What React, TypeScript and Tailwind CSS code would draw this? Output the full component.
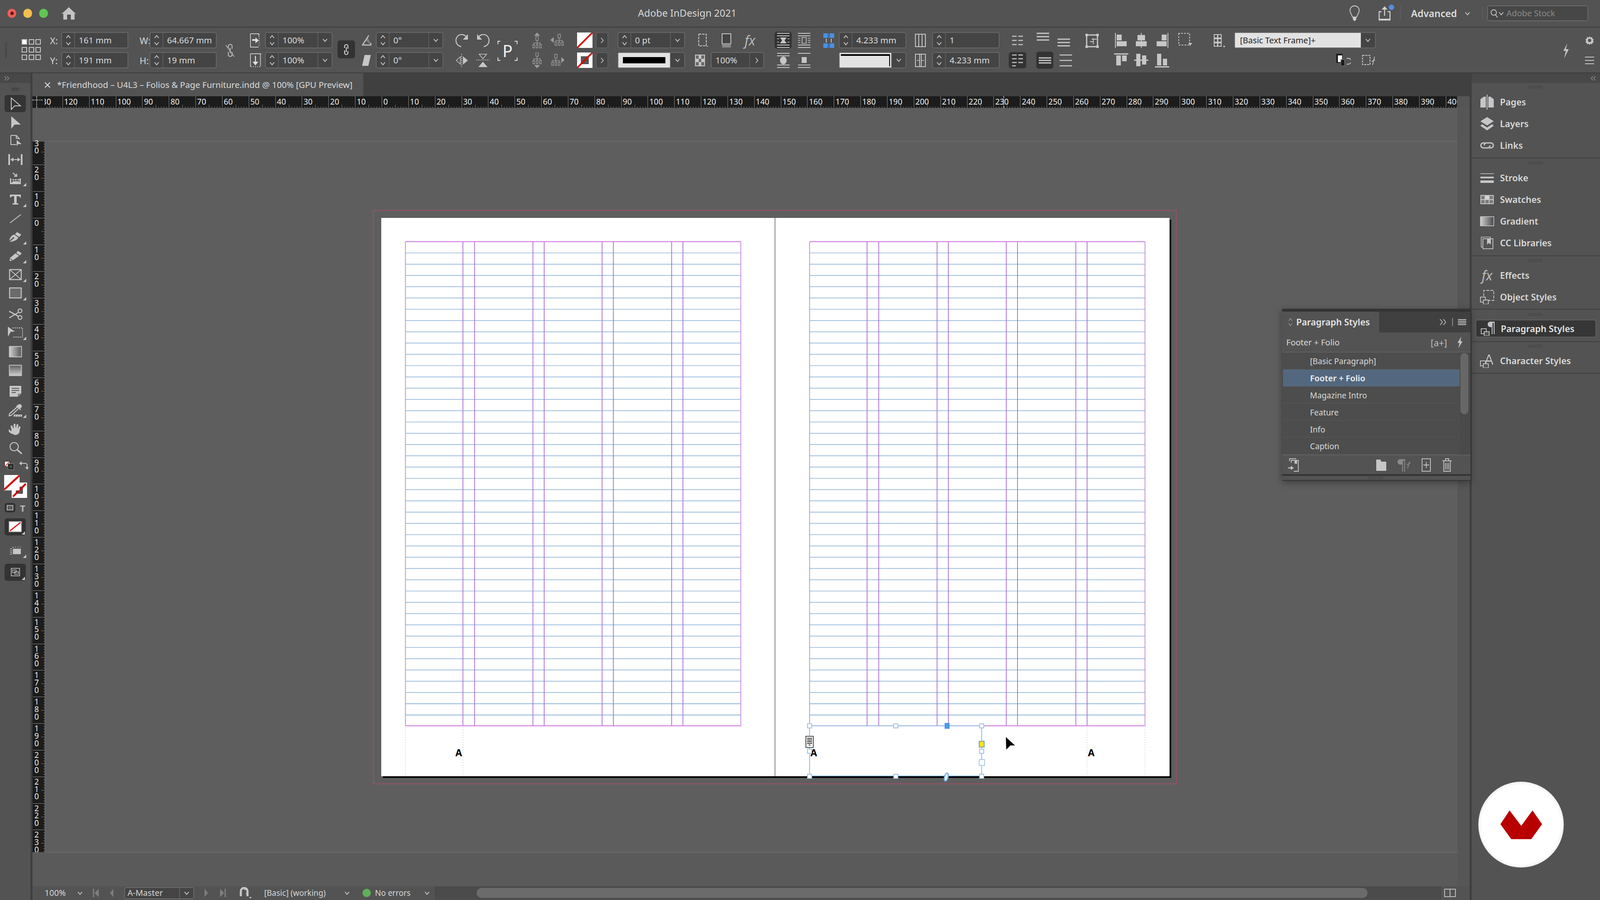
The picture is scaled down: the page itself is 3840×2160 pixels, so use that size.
import React from 'react';

const C = '#c6c6c6';
const Svg = ({ w, h, vb, children, className = '' }: any) => (
  <svg width={w} height={h} viewBox={vb || `0 0 ${w} ${h}`} className={`block shrink-0 ${className}`}>{children}</svg>
);
const Caret = ({ dir = 'd', c = '#d0d0d0' }: any) => (
  <Svg w={14} h={9}>
    <path d={dir === 'd' ? 'M2 1.5 7 7.5 12 1.5' : 'M2 7.5 7 1.5 12 7.5'} fill="none" stroke={c} strokeWidth="1.8" />
  </Svg>
);
const RightCaret = () => (
  <Svg w={9} h={16}><path d="M1.5 2 7 8 1.5 14" fill="none" stroke="#d0d0d0" strokeWidth="1.6" /></Svg>
);
const Stepper = () => (
  <div className="flex h-full w-[31px] shrink-0 flex-col items-center justify-center gap-[7px] border-r-2 border-[#5a5a5a]">
    <Caret dir="u" /><Caret />
  </div>
);
const Drop = () => (
  <div className="flex h-full w-[34px] shrink-0 items-center justify-center border-l-2 border-[#5a5a5a]"><Caret /></div>
);
const Field = ({ w, text, step = true, drop = false, right = false }: any) => (
  <div className={`flex h-[39px] shrink-0 items-center rounded-[5px] border-2 border-[#666666] bg-[#444444] text-[20.5px] leading-none text-[#dddddd] ${w}`}>
    {step && <Stepper />}
    <span className="flex-1 whitespace-nowrap pl-[9px]">{text}</span>
    {drop && <Drop />}
    {right && <div className="flex h-full w-[34px] shrink-0 items-center justify-center border-l-2 border-[#5a5a5a]"><RightCaret /></div>}
  </div>
);
const Rows = ({ className = '', children }: any) => <div className={`flex shrink-0 flex-col gap-[9px] ${className}`}>{children}</div>;
const Row = ({ className = '', children }: any) => <div className={`flex h-[39px] items-center ${className}`}>{children}</div>;
const Label = ({ children }: any) => <span className="w-[27px] shrink-0 text-[22px] leading-none text-[#d4d4d4]">{children}</span>;
const Dark = ({ className = '', children }: any) => (
  <div className={`flex items-center justify-center rounded-[6px] bg-[#333333] ${className}`}>{children}</div>
);
const NoneSwatch = ({ stroke = false }: any) => (
  <Svg w={37} h={37}>
    <rect width="37" height="37" fill="#ffffff" />
    {stroke && <rect x="9" y="9" width="19" height="19" fill="#555555" />}
    <path d="M0 37 37 0" stroke="#d40000" strokeWidth="4" />
  </Svg>
);
const Fly = () => <span className="absolute bottom-[2px] right-[10px] h-0 w-0 border-b-[8px] border-l-[8px] border-b-[#c6c6c6] border-l-transparent" />;

const Tool = ({ m = '', fly = false, children, dark = false }: any) => (
  <div className={`relative flex h-[41px] w-[73px] shrink-0 items-center justify-center ${m}`}>
    {dark && <div className="absolute inset-x-[11px] inset-y-0 rounded-[6px] bg-[#343434]" />}
    <div className="relative">{children}</div>
    {fly && <Fly />}
  </div>
);

const ToolBar = () => (
  <div className="flex w-[73px] shrink-0 flex-col bg-[#535353]">
    <div className="flex h-[23px] items-center bg-[#484848] pl-[10px]">
      <Svg w={14} h={12}><path d="M1 1l4 5-4 5M7 1l4 5-4 5" fill="none" stroke="#aaaaaa" strokeWidth="1.2" /></Svg>
    </div>
    <div className="flex h-[29px] items-center justify-center">
      <div className="h-[8px] w-[18px] bg-[repeating-linear-gradient(90deg,#3a3a3a_0_1px,transparent_1px_2px)]" />
    </div>
    <Tool dark><Svg w={30} h={30}><path d="M5 1 27 20H13L5 29Z" fill="none" stroke={C} strokeWidth="2" /></Svg></Tool>
    <Tool m="mt-[4px]"><Svg w={30} h={30}><path d="M5 0 28 20H13L5 30Z" fill={C} /></Svg></Tool>
    <Tool m="mt-[2px]"><Svg w={30} h={30}><path d="M4 3h13l7 7v3M17 3v7h7M4 3v22h13" fill="none" stroke={C} strokeWidth="2" /><path d="M18 14 30 24H21L18 29Z" fill={C} /></Svg></Tool>
    <Tool m="mt-[5px]"><Svg w={36} h={30}><path d="M1 2h4v26H1zM31 2h4v26h-4z" fill={C} /><path d="M7 15H29" stroke={C} strokeWidth="2" /><path d="M6 15l7-5v10zM30 15l-7-5v10z" fill={C} /></Svg></Tool>
    <Tool m="mt-[5px]" fly><Svg w={30} h={30}><path d="M2 14h3v10h20V14h3v14H2z" fill={C} /><path d="M8 16h4v3H8zM14 16h4v3h-4zM20 16h4v3h-4zM8 21h16v3H8z" fill={C} /><path d="M9 1l8 7M12 9h6V3" fill="none" stroke={C} strokeWidth="2.5" /></Svg></Tool>
    <Tool m="mt-[9px]" fly><Svg w={30} h={30}><path d="M2 3h26v7h-2l-2-3h-6v17h4v3H8v-3h4V7H6l-2 3H2z" fill={C} /></Svg></Tool>
    <Tool m="mt-[4px]"><Svg w={30} h={30}><path d="M2 26 28 6" stroke={C} strokeWidth="2.2" /></Svg></Tool>
    <Tool m="mt-[4px]" fly><Svg w={32} h={30}><path d="M20 3 30 9 25 15 15 8z" fill={C} /><path d="M13 9 23 16c-2 6-10 9-21 11l9-8a2 2 0 1 0-2-2l-8 7c2-9 7-14 12-15z" fill={C} /></Svg></Tool>
    <Tool m="mt-[4px]" fly><Svg w={32} h={30}><path d="M22 3 31 9 27 14 18 8zM16 9 25 15 11 25 2 28 3 20z" fill={C} /><path d="M4 22l5 3" stroke="#535353" strokeWidth="1.5" /></Svg></Tool>
    <Tool m="mt-[4px]" fly><Svg w={32} h={30}><rect x="2" y="3" width="28" height="24" fill="none" stroke={C} strokeWidth="2.4" /><path d="M2 3 30 27M30 3 2 27" stroke={C} strokeWidth="1.8" /></Svg></Tool>
    <Tool m="mt-[3px]" fly><Svg w={32} h={30}><rect x="2" y="3" width="28" height="24" fill="#6b6b6b" stroke={C} strokeWidth="2.4" /></Svg></Tool>
    <Tool m="mt-[10px]"><Svg w={34} h={30}><path d="M2 8 24 20M2 24 24 11" stroke={C} strokeWidth="2.6" /><circle cx="28" cy="7" r="4.5" fill="none" stroke={C} strokeWidth="2.4" /><circle cx="28" cy="23" r="4.5" fill="none" stroke={C} strokeWidth="2.4" /></Svg></Tool>
    <Tool m="mt-[3px]" fly><Svg w={38} h={30}><path d="M1 1 18 13 8 13 1 25Z" fill={C} /><path d="M12 4H36V26H12" fill="none" stroke={C} strokeWidth="1.8" strokeDasharray="3 2" /></Svg></Tool>
    <Tool m="mt-[5px]"><Svg w={32} h={28}><defs><linearGradient id="g1"><stop offset="0" stopColor="#d0d0d0" /><stop offset="1" stopColor="#555555" /></linearGradient></defs><rect x="1.5" y="1.5" width="29" height="25" fill="url(#g1)" stroke={C} strokeWidth="2" /></Svg></Tool>
    <Tool m="mt-[4px]"><Svg w={32} h={28}><defs><linearGradient id="g2" x2="0" y2="1"><stop offset="0" stopColor="#5c5c5c" /><stop offset="1" stopColor="#cfcfcf" /></linearGradient></defs><rect x="1.5" y="1.5" width="29" height="25" fill="url(#g2)" stroke={C} strokeWidth="2" /></Svg></Tool>
    <Tool m="mt-[9px]"><Svg w={30} h={28}><path d="M1 1H29V20L21 27H1Z" fill={C} /><path d="M6 7H24M6 12H24M6 17H16" stroke="#535353" strokeWidth="2" /><path d="M22 26V21H28" fill="none" stroke="#535353" strokeWidth="1.5" /></Svg></Tool>
    <Tool m="mt-[5px]" fly><Svg w={40} h={34}><path d="M24 7 33 16M27 4a4 4 0 0 1 6 6l-4 3-6-6z" fill={C} stroke={C} strokeWidth="2" /><path d="M24 9 6 25l-1 5 5-1L27 13" fill="none" stroke={C} strokeWidth="2.4" /><path d="M16 27h20v5H16z" fill={C} /><path d="M19 29h2v2h-2zM25 29h2v2h-2zM31 29h2v2h-2z" fill="#535353" /></Svg></Tool>
    <Tool m="mt-[4px]"><Svg w={32} h={30}>
      <g fill={C}>
        <ellipse cx="16" cy="20" rx="10" ry="9" />
        <rect x="6" y="6" width="4.500" height="16" rx="2.200" transform="rotate(-14 8 14)" />
        <rect x="12" y="2" width="4.500" height="18" rx="2.200" transform="rotate(-4 14 10)" />
        <rect x="18" y="3" width="4.500" height="17" rx="2.200" transform="rotate(6 20 10)" />
        <rect x="23" y="8" width="4" height="14" rx="2" transform="rotate(16 25 14)" />
        <rect x="0" y="14" width="4.500" height="14" rx="2.200" transform="rotate(-48 2 20)" />
      </g>
    </Svg></Tool>
    <Tool m="mt-[4px]"><Svg w={32} h={32}><circle cx="13" cy="13" r="10" fill="none" stroke={C} strokeWidth="2.2" /><path d="M21 21 30 29" stroke={C} strokeWidth="3.6" strokeLinecap="round" /></Svg></Tool>
    <div className="flex h-[40px] items-center pl-[10px] pt-[4px]">
      <Svg w={24} h={22}><rect x="1" y="1" width="13" height="13" fill="#ffffff" stroke="#333333" strokeWidth="1.5" /><path d="M1 14 14 1" stroke="#d40000" strokeWidth="1.5" /><rect x="9" y="7" width="14" height="14" fill="#222222" stroke="#777777" strokeWidth="1.5" /><rect x="13" y="11" width="6" height="6" fill="#555555" /></Svg>
      <Svg w={22} h={22} className="ml-[12px]"><path d="M3 6h12a4 4 0 0 1 4 4v6" fill="none" stroke={C} strokeWidth="2" /><path d="M0 6l6-5v10zM19 21l-5-6h10z" fill={C} /></Svg>
    </div>
    <div className="relative mt-[4.5px] h-[60px]">
      <div className="ml-[28px] mt-[18px]"><Svg w={37} h={37}><rect width="37" height="37" fill="#ffffff" /><rect x="10" y="10" width="17" height="17" fill="#555555" /><path d="M3 34 34 3" stroke="#d40000" strokeWidth="4.5" /></Svg></div>
      <div className="absolute left-[10px] top-0"><Svg w={37} h={37}><rect width="37" height="37" fill="#ffffff" /><path d="M0 35 37 1" stroke="#d40000" strokeWidth="4.5" /></Svg></div>
    </div>
    <div className="mt-[4px] flex h-[30px] items-center">
      <Dark className="ml-[11px] h-[23px] w-[26px]"><Svg w={16} h={13}><rect x="1" y="1" width="14" height="11" fill="#5c5c5c" stroke={C} strokeWidth="1.6" /></Svg></Dark>
      <span className="ml-[11px] font-['Liberation_Serif',serif] text-[22px] font-bold leading-none text-[#b8b8b8]">T</span>
    </div>
    <Dark className="relative mx-[11px] mt-[10px] h-[41px]">
      <Svg w={31} h={26}><rect x="1" y="1" width="29" height="24" fill="#ffffff" stroke="#bbbbbb" strokeWidth="2" /><path d="M3 23 28 3" stroke="#d40000" strokeWidth="2.6" /></Svg>
      <span className="absolute bottom-[2px] right-[2px] h-0 w-0 border-b-[8px] border-l-[8px] border-b-[#c6c6c6] border-l-transparent" />
    </Dark>
    <Tool m="mt-[15.5px]" fly><Svg w={26} h={20}><path d="M7 6h19v13H7z" fill={C} /><path d="M0 6h5M7 1v3M13 1v2M19 1v2M25 1v2M0 11h5M0 15h5M0 19h5" stroke={C} strokeWidth="1.6" /></Svg></Tool>
    <Dark className="relative mx-[11px] mt-[11.5px] h-[41px]">
      <Svg w={22} h={20}><rect x="1" y="1" width="20" height="18" fill="none" stroke={C} strokeWidth="1.6" /><path d="M4 5h9v6H4zM9 9h9v6H9z" fill="none" stroke={C} strokeWidth="1.4" /></Svg>
      <span className="absolute bottom-[2px] right-[2px] h-0 w-0 border-b-[8px] border-l-[8px] border-b-[#c6c6c6] border-l-transparent" />
    </Dark>
  </div>
);

const hVals = [130, 120, 110, 100, 90, 80, 70, 60, 50, 40, 30, 20, 10, 0, ...Array.from({ length: 40 }, (_, i) => (i + 1) * 10)];
const vVals = [30, 20, 10, 0, ...Array.from({ length: 23 }, (_, i) => (i + 1) * 10)];
const ticks = [1, 2, 3, 4, 5, 6, 7, 8, 9];
const HCell = ({ v }: any) => (
  <div className="relative h-[28px] w-[63.85px] shrink-0 border-l border-[#8c8c8c] pl-[3px] text-[19px] leading-[26px] text-[#eeeeee]">
    {v}
    <Svg w={64} h={28} className="absolute left-0 top-0">
      {ticks.map((i) => <path key={i} d={`M${i * 6.385} ${i === 5 ? 20 : 25}V28`} stroke="#8a8a8a" strokeWidth="1" />)}
    </Svg>
  </div>
);
const VCell = ({ v }: any) => (
  <div className="relative h-[63.85px] w-[28px] shrink-0 border-t border-[#8c8c8c] pt-[3px] text-center text-[19px] leading-[17.8px] text-[#eeeeee]">
    <div className="w-[18px]">{String(v).split('').map((d, i) => <div key={i}>{d}</div>)}</div>
    <Svg w={28} h={64} className="absolute left-0 top-0">
      {ticks.map((i) => <path key={i} d={`M${i === 5 ? 20 : 25} ${i * 6.385}H28`} stroke="#8a8a8a" strokeWidth="1" />)}
    </Svg>
  </div>
);

const Guides = () => {
  const cols = [0, 138, 166, 306, 333, 472, 499, 639, 666, 805];
  const lines = Array.from({ length: 42 }, (_, i) => 84 + i * 27.05);
  return (
    <svg width="1892" height="1340" className="absolute left-0 top-0">
      <path d="M945 0V1340" stroke="#8a8a8a" strokeWidth="2" />
      {[58, 1028].map((ox) => (
        <g key={ox}>
          {lines.map((y) => <path key={y} d={`M${ox} ${y}h805`} stroke="#94b8dc" strokeWidth={y > 1150 ? 2 : 1.7} />)}
          {cols.map((x) => <path key={x} d={`M${ox + x} 57V1219`} stroke={x === 0 || x === 805 ? '#c580e2' : '#a566d6'} strokeWidth="1.7" />)}
          <path d={`M${ox} 57h805M${ox} 1219h805`} stroke="#cc77dd" strokeWidth="2" />
          <path d={`M${ox + 666} 1222V1340M${ox + 805} 1222V1340`} stroke="#c4ccd8" strokeWidth="1.4" strokeDasharray="2 4" opacity={ox === 1028 ? 1 : 0} />
          <path d={`M${ox} 1222V1340M${ox + 138} 1222V1340`} stroke="#b7c4d8" strokeWidth="1.4" strokeDasharray="2 4" opacity={ox === 58 ? 1 : 0} />
        </g>
      ))}
      <path d="M1028 1219H1441V1340H1028Z" fill="#ffffff" stroke="#79aee0" strokeWidth="1.6" />
      <path d="M1028 1339H1441" stroke="#8fbfee" strokeWidth="1.6" />
    </svg>
  );
};

const handles = [
  'left-[1022px] top-[1213px]', 'left-[1229px] top-[1213px]', 'left-[1435px] top-[1213px]',
  'left-[1022px] top-[1274px]', 'left-[1435px] top-[1274px]',
  'left-[1022px] top-[1334px]', 'left-[1229px] top-[1334px]', 'left-[1435px] top-[1334px]',
];
const AGlyph = ({ className }: any) => (
  <span className={`absolute font-['Liberation_Sans',sans-serif] text-[23px] font-bold leading-none text-black ${className}`}>A</span>
);

const Page = () => (
  <div className="relative h-[1340px] w-[1892px] bg-white shadow-[4px_4px_0_#000000]">
    <Guides />
    <AGlyph className="left-[178px] top-[1272px]" />
    <AGlyph className="left-[1030px] top-[1272px]" />
    <AGlyph className="left-[1696px] top-[1272px]" />
    {handles.map((h) => <span key={h} className={`absolute h-[12px] w-[12px] border-2 border-[#9cc3ea] bg-white ${h}`} />)}
    <span className="absolute left-[1352px] top-[1212px] h-[14px] w-[12px] bg-[#4f97ef]" />
    <span className="absolute left-[1434px] top-[1299px] h-[16px] w-[15px] border-2 border-[#a9cbec] bg-white" />
    <span className="absolute left-[1434px] top-[1255px] h-[16px] w-[14px] border-2 border-[#7e9cb0] bg-[#f7e600]" />
    <div className="absolute left-[1018px] top-[1243px] flex h-[29px] w-[20px] flex-col items-center gap-[2px] border-2 border-[#555555] bg-[#f4f4f4] pt-[3px]">
      <span className="h-[2px] w-[12px] bg-[#333333]" /><span className="h-[2px] w-[12px] bg-[#333333]" /><span className="h-[2px] w-[12px] bg-[#333333]" /><span className="h-[2px] w-[12px] bg-[#333333]" /><span className="h-[2px] w-[4px] bg-[#333333]" />
    </div>
    <div className="absolute left-[1346px] top-[1330px]">
      <Svg w={20} h={24}><ellipse cx="10" cy="12" rx="4.500" ry="10" transform="rotate(14 10 12)" fill="#e4eef8" stroke="#6ca3de" strokeWidth="2.4" /></Svg>
    </div>
    <div className="absolute left-[1498px] top-[1245px]">
      <Svg w={24} h={32}><path d="M1 1 23 21 12 21 2 31Z" fill="#000000" /></Svg>
    </div>
  </div>
);

const Grip = () => <div className="h-[8px] w-[36px] bg-[repeating-linear-gradient(90deg,#3c3c3c_0_1px,transparent_1px_4px)]" />;
const PanelItem = ({ icon, label, h = 'h-[52px]' }: any) => (
  <div className={`flex items-center pl-[18px] ${h}`}>
    <div className="flex w-[38px] justify-center">{icon}</div>
    <span className="ml-[12px] text-[21.5px] font-semibold leading-none text-[#dadada]">{label}</span>
  </div>
);
const Section = ({ top, h, children }: any) => (
  <div className={`flex flex-col border-b-2 border-[#404040] ${h}`}>
    <div className={`flex items-center justify-center ${top}`}><Grip /></div>
    {children}
  </div>
);
const ObjIcon = () => (
  <>
    <rect x="1" y="17" width="12" height="12" fill="none" stroke={C} strokeWidth="1.8" />
    <rect x="8" y="24" width="12" height="10" fill="#535353" stroke={C} strokeWidth="1.8" />
  </>
);

const RightPanel = () => (
  <div className="flex w-[308px] shrink-0 flex-col bg-[#535353]">
    <div className="flex h-[23px] items-center justify-end bg-[#484848] pr-[9px]">
      <Svg w={14} h={12}><path d="M6 1 2 6l4 5M12 1 8 6l4 5" fill="none" stroke="#aaaaaa" strokeWidth="1.2" /></Svg>
    </div>
    <Section top="h-[20px]" h="h-[181px]">
      <PanelItem label="Pages" icon={<Svg w={34} h={36}><path d="M16 0h2v36h-2zM1 11 9 5h5v26H1zM20 5h5l8 6v20H20z" fill={C} /></Svg>} />
      <PanelItem label="Layers" icon={<Svg w={34} h={32}><path d="M17 0 33 10 17 20 1 10z" fill={C} /><path d="M5 17 17 25 29 17 33 21 17 32 1 21z" fill={C} /></Svg>} />
      <PanelItem label="Links" icon={<Svg w={36} h={18}><path d="M13 3H9a6 6 0 0 0 0 12h10a6 6 0 0 0 6-6M23 15h4a6 6 0 0 0 0-12H17a6 6 0 0 0-6 6" fill="none" stroke={C} strokeWidth="3" /></Svg>} />
    </Section>
    <Section top="h-[21px]" h="h-[235px]">
      <PanelItem label="Stroke" icon={<Svg w={34} h={24}><path d="M1 1h32v1.5H1zM1 9h32v4H1zM1 18h32v6H1z" fill={C} /></Svg>} />
      <PanelItem label="Swatches" icon={<Svg w={32} h={22}><rect width="32" height="22" fill={C} /><path d="M2 2h8v8H2zM22 2h8v8h-8zM2 12h8v8H2zM12 12h8v8h-8zM22 12h8v8h-8z" fill="#7a7a7a" /><path d="M12 2h8v8h-8z" fill="#d5d5d5" /></Svg>} />
      <PanelItem label="Gradient" icon={<Svg w={34} h={24}><defs><linearGradient id="g3"><stop offset="0" stopColor="#d0d0d0" /><stop offset="1" stopColor="#484848" /></linearGradient></defs><rect x="1" y="1" width="32" height="22" fill="url(#g3)" stroke={C} strokeWidth="1.6" /></Svg>} />
      <PanelItem label="CC Libraries" icon={<Svg w={32} h={32}><path d="M6 26H2V2h22v4" fill="none" stroke={C} strokeWidth="1.6" /><rect x="6" y="6" width="24" height="24" fill="none" stroke={C} strokeWidth="1.8" /><path d="M16 6h9v14l-4.500-4-4.500 4z" fill={C} /></Svg>} />
    </Section>
    <Section top="h-[20px]" h="h-[128px]">
      <PanelItem label="Effects" icon={<span className="font-['Liberation_Serif',serif] text-[32px] italic leading-none text-[#bdbdbd]">fx</span>} />
      <PanelItem label="Object Styles" icon={<Svg w={34} h={34}><path d="M9 15V1h24v24H21" fill="none" stroke={C} strokeWidth="1.8" strokeDasharray="7 3" /><ObjIcon /></Svg>} />
    </Section>
    <Section top="h-[24px]" h="h-[78px]">
      <div className="mx-[9px] flex h-[43px] items-center rounded-[6px] border-2 border-[#5e5e5e] bg-[#363636] pl-[9px]">
        <div className="flex w-[38px] justify-center"><Svg w={34} h={34}><path d="M22 0h11v30h-2V3h-3v27h-2V13h-2a6.500 6.500 0 0 1-2-13z" fill={C} /><ObjIcon /></Svg></div>
        <span className="ml-[12px] text-[21.5px] font-semibold leading-none text-[#e4e4e4]">Paragraph Styles</span>
      </div>
    </Section>
    <Section top="h-[20px]" h="h-[76px]">
      <PanelItem h="h-[50px]" label="Character Styles" icon={<Svg w={34} h={34}><path d="M20 2h3l9 24h-3l-2-7h-11l-2 7h-3zM17 16h9l-4.500-11z" fill={C} /><ObjIcon /></Svg>} />
    </Section>
    <div className="ml-[16px] mt-[979px] flex h-[206px] w-[205px] items-center justify-center rounded-full bg-white shadow-[inset_0_0_10px_rgba(0,0,0,0.15)]">
      <Svg w={100} h={69}><path d="M22 0 50 37 77 0 100 33 74 69H26L0 33Z" fill="#b90000" /></Svg>
    </div>
  </div>
);

const styleRows = ['[Basic Paragraph]', 'Footer + Folio', 'Magazine Intro', 'Feature', 'Info', 'Caption'];
const ParagraphPanel = () => (
  <div className="absolute left-[3077px] top-[741px] w-[452px] shadow-[0_4px_16px_rgba(0,0,0,0.35)]">
    <div className="h-[7px] bg-[#343434]" />
    <div className="flex h-[50px] bg-[#404040]">
      <div className="flex w-[233px] items-center bg-[#535353] pl-[15px]">
        <Svg w={10} h={22}><path d="M1 8 5 2l4 6M1 14l4 6 4-6" fill="none" stroke="#aaaaaa" strokeWidth="1.2" /></Svg>
        <span className="ml-[9px] text-[21.5px] font-semibold leading-none text-[#e6e6e6]">Paragraph Styles</span>
      </div>
      <div className="ml-auto flex items-center pr-[10px]">
        <Svg w={18} h={16}><path d="M1 1l6 7-6 7M9 1l6 7-6 7" fill="none" stroke="#c8c8c8" strokeWidth="1.6" /></Svg>
        <span className="mx-[12px] h-[20px] w-[2px] bg-[#8a8a8a]" />
        <Svg w={20} h={14}><path d="M0 1h20M0 5h20M0 9h20M0 13h20" stroke="#c8c8c8" strokeWidth="1.8" /></Svg>
      </div>
    </div>
    <div className="flex h-[48px] items-center border-b-2 border-[#5f5f5f] bg-[#535353] pl-[10px] pt-[2px]">
      <span className="text-[20px] leading-none text-[#dcdcdc]">Footer + Folio</span>
      <span className="ml-auto text-[22px] leading-none text-[#bdbdbd]">[a+]</span>
      <Svg w={14} h={28} className="ml-[24px] mr-[18px]"><path d="M10 0 1 15h5L3 28 13 11H8z" fill={C} /></Svg>
    </div>
    <div className="flex h-[245px] bg-[#4a4a4a]">
      <div className="ml-[2px] flex w-[424px] flex-col">
        {styleRows.map((r, i) => (
          <div key={r} className={`flex h-[41px] items-center border-b border-[#585858] pl-[65px] pt-[2px] leading-none ${i === 1 ? 'bg-[#53687f] text-[20px] font-semibold text-[#f0f0f0]' : 'bg-[#4d4d4d] text-[19.2px] text-[#dadada]'}`}>{r}</div>
        ))}
      </div>
      <div className="ml-[2px] mt-[1px] h-[147px] w-[19px] rounded-full bg-[#676767]" />
    </div>
    <div className="flex h-[47px] items-center border-t-2 border-[#5f5f5f] bg-[#535353] pl-[14px]">
      <Svg w={26} h={34}><path d="M4 8V2h16M8 12V6h17v26H14" fill="none" stroke={C} strokeWidth="1.8" /><path d="M0 24h12" stroke={C} strokeWidth="2.4" /><path d="M14 24l-7-5v10z" fill={C} /><path d="M16 7h6v8l-3-2-3 2z" fill={C} /></Svg>
      <Svg w={26} h={28} className="ml-[185px]"><path d="M1 6V1h10l2 5h12v22H1z" fill={C} /></Svg>
      <Svg w={34} h={32} className="ml-[24px]"><path d="M8 2h12v30h-2V5h-3v27h-2V15H9a6.500 6.500 0 0 1-1-13z" fill="#8a8a8a" /><path d="M24 16l9-6M26 24l5-16" stroke="#8a8a8a" strokeWidth="1.8" /></Svg>
      <Svg w={22} h={32} className="ml-[26px]"><rect x="1" y="1" width="20" height="30" fill="none" stroke={C} strokeWidth="1.8" /><path d="M11 9v14M4 16h14" stroke={C} strokeWidth="1.8" /></Svg>
      <Svg w={22} h={32} className="ml-[28px]"><path d="M0 6h22M7 5V1h8v4M3 7v24h16V7M7 11v16M11 11v16M15 11v16" fill="none" stroke={C} strokeWidth="1.8" /></Svg>
    </div>
    <div className="h-[4px] bg-[#343434]" />
    <div className="flex h-[12px] items-center justify-center border-b-2 border-[#343434] bg-[#535353]"><Grip /></div>
  </div>
);

const refGrid = [0, 1, 2];
const Wrap = ({ c = C, kind }: any) => (
  <Svg w={32} h={38}>
    <path d="M1 2h30M1 36h30" stroke={c} strokeWidth="2" />
    {kind === 1 && <><path d="M1 8h30M1 30h30" stroke={c} strokeWidth="1.8" /><path d="M8 12h16l-5 7 5 7H8l5-7z" fill={c} /><path d="M1 15h5M1 23h5M26 15h5M26 23h5" stroke={c} strokeWidth="1.6" /></>}
    {kind === 2 && <><path d="M1 8h30M1 30h30" stroke={c} strokeWidth="1.8" /><rect x="11" y="12" width="10" height="14" fill="none" stroke={c} strokeWidth="1.6" /><path d="M1 14h6M1 19h6M1 24h6M25 14h6M25 19h6M25 24h6" stroke={c} strokeWidth="1.4" /></>}
    {kind === 3 && <><path d="M1 8h30M1 30h30" stroke={c} strokeWidth="1.8" /><ellipse cx="16" cy="19" rx="8" ry="9.500" fill={c} /></>}
    {kind === 4 && <><path d="M1 30h30" stroke={c} strokeWidth="1.8" /><rect x="10" y="11" width="12" height="14" fill={c} /></>}
  </Svg>
);
const AlignIcon = ({ kind }: any) => (
  <Svg w={34} h={36}>
    {kind === 'l' && <path d="M2 0h2v36H2zM6 4h12v14H6zM6 20h24v12H6z" fill={C} />}
    {kind === 'c' && <path d="M16 0h2v36h-2zM8 5h18v13H8zM4 20h26v12H4z" fill={C} />}
    {kind === 'r' && <path d="M30 0h2v36h-2zM16 4h12v14H16zM4 20h24v12H4z" fill={C} />}
    {kind === 't' && <path d="M0 1h34v3H0zM5 6h11v24H5zM19 6h11v14H19z" fill={C} />}
    {kind === 'm' && <path d="M0 16h34v3H0zM5 2h10v30H5zM19 6h10v22H19z" fill={C} />}
    {kind === 'b' && <path d="M0 32h34v3H0zM5 2h10v28H5zM19 14h10v16H19z" fill={C} />}
  </Svg>
);
const D = '#9c9c9c';
const Hier = ({ arrow }: any) => (
  <Svg w={36} h={38}>
    <g transform={arrow === 'u' ? 'translate(7 10)' : arrow === 'd' ? 'translate(7 0)' : arrow === 'l' ? 'translate(11 4)' : 'translate(3 4)'}>
      <rect x="8" y="0" width="6" height="9" fill="none" stroke={D} strokeWidth="1.5" />
      <path d="M11 9v6M3 15h16M3 15v4M11 15v4M19 15v4" stroke={D} strokeWidth="1.5" fill="none" />
      <path d="M1 19h4v8H1zM9 19h4v8H9zM17 19h4v8h-4z" fill="none" stroke={D} strokeWidth="1.5" />
    </g>
    {arrow === 'u' && <path d="M18 0l7 8H11z" fill={D} />}
    {arrow === 'd' && <path d="M18 38l7-8H11z" fill={D} />}
    {arrow === 'l' && <path d="M1 18l8-7v14z" fill={D} />}
    {arrow === 'r' && <path d="M35 18l-8-7v14z" fill={D} />}
  </Svg>
);

const ControlPanel = () => (
  <div className="flex h-[112px] shrink-0 border-b-2 border-t-2 border-[#3c3c3c] bg-[#535353] pt-[11px]">
    <div className="ml-[12px] mt-[25px] h-[36px] w-[5px] bg-[repeating-linear-gradient(0deg,#3a3a3a_0_2px,transparent_2px_5px)]" />
    <div className="ml-[35px] mt-[17px] flex h-[50px] w-[46px] flex-col justify-between">
      {refGrid.map((r) => (
        <div key={r} className="flex justify-between">
          {refGrid.map((c) => <span key={c} className={`h-[13px] w-[13px] border-2 border-[#c6c6c6] ${r === 0 && c === 0 ? 'bg-white' : ''}`} />)}
        </div>
      ))}
    </div>
    <Rows className="ml-[22px] w-[188px]">
      <Row><Label>X:</Label><Field w="w-[161px]" text="161 mm" /></Row>
      <Row><Label>Y:</Label><Field w="w-[161px]" text="191 mm" /></Row>
    </Rows>
    <Rows className="ml-[27px] w-[185px]">
      <Row><span className="w-[24px] shrink-0 text-[22px] leading-none text-[#d4d4d4]">W:</span><Field w="w-[161px]" text="64.667 mm" /></Row>
      <Row><span className="w-[24px] shrink-0 text-[22px] leading-none text-[#d4d4d4]">H:</span><Field w="w-[161px]" text="19 mm" /></Row>
    </Rows>
    <div className="ml-[20px] mt-[27px] w-[24px]">
      <Svg w={24} h={34}><path d="M8 12V7a4.500 4.500 0 0 1 9 0v6M8 21v6a4.500 4.500 0 0 0 9 0v-6M12.500 11v12" fill="none" stroke="#b4b4b4" strokeWidth="2.4" /><path d="M2 4 22 32" stroke="#b4b4b4" strokeWidth="2" /></Svg>
    </div>
    <Rows className="ml-[36px] w-[198px]">
      <Row>
        <div className="w-[36px] shrink-0"><Svg w={27} h={34}><path d="M1 1h20v5M1 1v32h20" fill="none" stroke={C} strokeWidth="1.8" /><path d="M22 2v30" stroke={C} strokeWidth="1.8" strokeDasharray="2 3" /><path d="M5 16h10" stroke="#e0e0e0" strokeWidth="4" /><path d="M21 17l-8-7v14z" fill="#e0e0e0" /></Svg></div>
        <Field w="w-[162px]" text="100%" drop />
      </Row>
      <Row>
        <div className="w-[36px] shrink-0"><Svg w={27} h={34}><path d="M1 1h25v2M1 1v30h2M25 1v30" fill="none" stroke={C} strokeWidth="1.8" /><path d="M2 32h24" stroke={C} strokeWidth="1.8" strokeDasharray="2 3" /><path d="M13 6v15" stroke="#e0e0e0" strokeWidth="2.4" /><path d="M13 29l-7-9h14z" fill="#e0e0e0" /></Svg></div>
        <Field w="w-[162px]" text="100%" drop />
      </Row>
    </Rows>
    <Dark className="ml-[12px] mt-[20px] h-[43px] w-[42px]">
      <Svg w={18} h={30}><path d="M5 11V7a4 4 0 0 1 8 0v6M5 17v6a4 4 0 0 0 8 0v-4M9 9v12" fill="none" stroke="#d8d8d8" strokeWidth="2.2" /></Svg>
    </Dark>
    <Rows className="ml-[16px] w-[196px]">
      <Row>
        <div className="w-[34px] shrink-0"><Svg w={24} h={26}><path d="M1 24h21V19M17 1 2 24" fill="none" stroke={C} strokeWidth="2.4" /><path d="M22 24 10 13l4-8 9 19z" fill={C} opacity="0.4" /></Svg></div>
        <Field w="w-[162px]" text="0°" drop />
      </Row>
      <Row>
        <div className="w-[34px] shrink-0"><Svg w={24} h={28}><path d="M7 1h15l-6 26H1z" fill={C} /></Svg></div>
        <Field w="w-[162px]" text="0°" drop />
      </Row>
    </Rows>
    <Rows className="ml-[28px] w-[84px]">
      <Row className="justify-between">
        <Svg w={34} h={34}><path d="M15 32a15 15 0 0 1-5-28 15 15 0 0 1 17 4" fill="none" stroke={C} strokeWidth="2.4" strokeDasharray="60 3 2 3" /><path d="M31 2v13H19z" fill={C} /></Svg>
        <Svg w={34} h={34}><path d="M19 32a15 15 0 0 0 5-28 15 15 0 0 0-17 4" fill="none" stroke={C} strokeWidth="2.4" strokeDasharray="60 3 2 3" /><path d="M3 2v13h12z" fill={C} /></Svg>
      </Row>
      <Row className="justify-between">
        <Svg w={34} h={34}><path d="M16 1v32" stroke={C} strokeWidth="1.6" strokeDasharray="3 2" /><path d="M13 8 3 17l10 9z" fill="none" stroke={C} strokeWidth="1.6" /><path d="M19 7 31 17 19 27z" fill={C} /></Svg>
        <Svg w={34} h={34}><path d="M1 16h32" stroke={C} strokeWidth="1.6" strokeDasharray="3 2" /><path d="M8 2h18l-9 11z" fill="none" stroke={C} strokeWidth="1.6" /><path d="M6 33h22L17 20z" fill={C} /></Svg>
      </Row>
    </Rows>
    <div className="relative ml-[18px] mt-[21px] flex h-[48px] w-[48px] items-center justify-center">
      <Svg w={48} h={48} className="absolute left-0 top-0"><path d="M1 8V1h6M41 1h6v7M1 40v7h6M47 40v7h-6" fill="none" stroke="#e0e0e0" strokeWidth="2" /></Svg>
      <span className="font-['Liberation_Serif',serif] text-[40px] leading-none text-[#f0f0f0]">P</span>
    </div>
    <Rows className="ml-[29px] w-[85px]">
      <Row className="justify-between"><Hier arrow="u" /><Hier arrow="l" /></Row>
      <Row className="justify-between"><Hier arrow="d" /><Hier arrow="r" /></Row>
    </Rows>
    <Rows className="ml-[29px] w-[75px]">
      <Row><NoneSwatch /><div className="ml-[8px] flex h-[39px] w-[30px] items-center justify-center rounded-[5px] border-2 border-[#5f5f5f] bg-[#444444]"><RightCaret /></div></Row>
      <Row><NoneSwatch stroke /><div className="ml-[8px] flex h-[39px] w-[30px] items-center justify-center rounded-[5px] border-2 border-[#5f5f5f] bg-[#444444]"><RightCaret /></div></Row>
    </Rows>
    <Rows className="ml-[22px] w-[162px]">
      <Field w="w-[162px]" text="0 pt" drop />
      <div className="flex h-[39px] rounded-[5px] border-2 border-[#666666] bg-[#444444]">
        <div className="flex flex-1 items-center justify-center bg-[#e2e2e2]"><div className="h-[15px] w-[102px] bg-black" /></div>
        <Drop />
      </div>
    </Rows>
    <Rows className="ml-[24px] w-[166px]">
      <Row>
        <Svg w={24} h={34} className="ml-[7px]"><path d="M2 2h18v28H2z" fill="none" stroke={C} strokeWidth="2" strokeDasharray="6 2" /><path d="M20 30l3 3 1-3z" fill={C} /></Svg>
        <Svg w={26} h={36} className="ml-[32px]"><rect x="2" y="2" width="21" height="24" fill="#444444" stroke={C} strokeWidth="2" /><rect x="2" y="26" width="21" height="9" fill="#8a8a8a" /></Svg>
        <span className="ml-[30px] font-['Liberation_Serif',serif] text-[32px] italic leading-none text-[#b8b8b8]">fx</span>
      </Row>
      <Row>
        <Svg w={24} h={28} className="ml-0"><rect width="24" height="28" fill={C} /><path d="M2 2h7v8H2zM15 2h7v8h-7zM9 10h6v8H9zM2 18h7v8H2zM15 18h7v8h-7z" fill="#6a6a6a" /></Svg>
        <div className="ml-[14px]"><Field w="w-[128px]" text="100%" step={false} right /></div>
      </Row>
    </Rows>
    <Rows className="ml-[25px] w-[92px]">
      <Row className="justify-between">
        <Dark className="h-[41px] w-[41px]"><Wrap kind={1} /></Dark>
        <div className="mr-[5px]"><Wrap kind={2} /></div>
      </Row>
      <Row className="justify-between">
        <div className="ml-[5px]"><Wrap kind={3} /></div>
        <div className="mr-[5px]"><Wrap kind={4} /></div>
      </Row>
    </Rows>
    <Rows className="ml-[24px] w-[200px]">
      <Row>
        <div className="w-[38px] shrink-0"><Svg w={28} h={36}><path d="M1 1h26v11H1z" fill="#4a90e2" /><path d="M1 25h26v11H1z" fill="#4a90e2" /><path d="M11 1h6v11h-6zM11 25h6v11h-6z" fill="#333333" opacity="0.35" /><path d="M8 14v9M20 14v9" stroke={C} strokeWidth="2" /></Svg></div>
        <Field w="w-[162px]" text="4.233 mm" />
      </Row>
      <div className="ml-[38px] flex h-[39px] rounded-[5px] border-2 border-[#666666] bg-[#444444]">
        <div className="flex flex-1 bg-[#e2e2e2] p-[3px]"><div className="w-full border-r-2 border-t-4 border-black" /></div>
        <Drop />
      </div>
    </Rows>
    <Rows className="ml-[21px] w-[203px]">
      <Row>
        <div className="w-[41px] shrink-0"><Svg w={26} h={34}><path d="M1 2h24v30H1zM9 2v30M17 2v30" fill="none" stroke={C} strokeWidth="2" /></Svg></div>
        <Field w="w-[162px]" text="1" />
      </Row>
      <Row>
        <div className="w-[41px] shrink-0"><Svg w={26} h={34}><path d="M1 2h24v30H1zM11 2v30M15 2v30" fill="none" stroke={C} strokeWidth="2" /><path d="M4 17h6M16 17h6" stroke={C} strokeWidth="1.6" /></Svg></div>
        <Field w="w-[162px]" text="4.233 mm" />
      </Row>
    </Rows>
    <Rows className="ml-[22px] w-[42px]">
      <Row className="justify-center"><Svg w={28} h={24}><path d="M1 2h11M16 2h11M1 12h11M16 12h11M1 22h11M16 22h11" stroke={C} strokeWidth="2.6" /></Svg></Row>
      <Dark className="h-[39px] w-[42px]"><Svg w={28} h={30}><path d="M1 2h11M16 2h11M1 11h11M16 11h11M1 20h11M16 20h11M1 28h9" stroke={C} strokeWidth="2.6" /></Svg></Dark>
    </Rows>
    <Rows className="ml-[24px] w-[92px]">
      <Row className="items-start">
        <Svg w={32} h={22}><path d="M1 3h30M1 11h30M1 19h30" stroke={C} strokeWidth="3" /></Svg>
        <Svg w={32} h={22} className="ml-[18px] mt-[14px]"><path d="M1 3h30M1 11h30M1 19h30" stroke={C} strokeWidth="3" /></Svg>
      </Row>
      <Row>
        <Dark className="h-[41px] w-[41px]"><Svg w={32} h={18}><path d="M1 3h30M1 9h30M1 15h30" stroke={C} strokeWidth="3" /></Svg></Dark>
        <Svg w={32} h={30} className="ml-[14px]"><path d="M1 2h30M1 15h30M1 28h30" stroke={C} strokeWidth="2.6" /></Svg>
      </Row>
    </Rows>
    <div className="ml-[25px] mt-[3px] w-[40px]"><Svg w={34} h={36}><path d="M4 4h26v28H4z" fill="none" stroke={C} strokeWidth="3" /><path d="M1 1h6v6H1zM27 1h6v6h-6zM1 29h6v6H1zM27 29h6v6h-6z" fill={C} /><path d="M14 14h14v14H14z" fill="#535353" /><path d="M16 14h12M20 26V12M12 20h8" stroke={C} strokeWidth="1.8" /></Svg></div>
    <Rows className="ml-[30px] w-[190px]">
      <Row>
        <AlignIcon kind="l" /><div className="ml-[14px]"><AlignIcon kind="c" /></div><div className="ml-[16px]"><AlignIcon kind="r" /></div>
        <Svg w={36} h={36} className="ml-[19px]"><path d="M4 1v28h26V1H4z" fill="none" stroke={C} strokeWidth="2" strokeDasharray="4 3" /><path d="M27 24h9l-4.500 7z" fill={C} /></Svg>
      </Row>
      <Row>
        <AlignIcon kind="t" /><div className="ml-[14px]"><AlignIcon kind="m" /></div><div className="ml-[16px]"><AlignIcon kind="b" /></div>
      </Row>
    </Rows>
    <div className="ml-[47px] w-[40px] pt-[3px]"><Svg w={32} h={36}><path d="M3 3h8v8H3zM12 3h8v8h-8zM3 13h8v8H3zM12 13h8v8h-8zM3 23h8v8H3zM12 23h8v8h-8z" fill="none" stroke={C} strokeWidth="2" /><path d="M24 30h6l-3 4z" fill={C} /></Svg></div>
    <Rows className="ml-[11px] w-[340px]">
      <div className="flex h-[39px] rounded-[5px] border-2 border-[#666666] bg-[#444444]">
        <span className="flex flex-1 items-center bg-[#e2e2e2] pl-[12px] text-[20px] leading-none text-[#222222]">[Basic Text Frame]+</span>
        <div className="flex w-[34px] items-center justify-center"><Caret /></div>
      </div>
      <Row className="justify-end pr-0">
        <Svg w={36} h={34}><rect x="1" y="1" width="15" height="22" fill="#1a1a1a" /><rect x="5" y="5" width="10" height="16" fill="#ffffff" /><rect x="12" y="15" width="9" height="15" fill="#1a1a1a" stroke="#888888" /><path d="M26 14h4a4 4 0 0 1 0 14h-4" fill="none" stroke={C} strokeWidth="1.8" transform="translate(0 -2)" /></Svg>
        <Svg w={34} h={30} className="ml-[26px]"><rect x="2" y="3" width="18" height="22" fill="none" stroke={C} strokeWidth="2" strokeDasharray="5 2" /><path d="M24 18l8-5M26 26l5-20" stroke={C} strokeWidth="1.6" /></Svg>
      </Row>
    </Rows>
    <div className="ml-[447px] mt-[27px] w-[32px]"><Svg w={18} h={36}><path d="M13 0 3 18h6L5 36 16 14H9z" fill={C} /></Svg></div>
    <Rows className="ml-[19px] w-[30px]">
      <Row className="justify-center">
        <Svg w={24} h={24}><path d="M12 2l2 3 4-1 1 4 3 2-2 3 2 3-3 2-1 3-4-1-2 3-2-3-4 1-1-3-3-2 2-3-2-3 3-2 1-4 4 1z" fill={C} /><circle cx="12" cy="12" r="4" fill="#535353" /></Svg>
      </Row>
      <Row className="justify-center"><Svg w={24} h={20}><path d="M1 2h22M1 10h22M1 18h22" stroke={C} strokeWidth="2.2" /></Svg></Row>
    </Rows>
  </div>
);

const TitleBar = () => (
  <div className="flex h-[64px] shrink-0 items-center bg-[#535353]">
    <span className="ml-[18px] flex h-[22px] w-[21px] items-center justify-center rounded-full bg-[#e95f5a]"><span className="h-[8px] w-[8px] rounded-full bg-[#6e0d0a]" /></span>
    <span className="ml-[17px] h-[22px] w-[21px] rounded-full bg-[#f4be4f]" />
    <span className="ml-[17px] h-[22px] w-[21px] rounded-full bg-[#61c554]" />
    <Svg w={34} h={30} className="ml-[33px]"><path d="M17 0 31 14v16h-9V18h-9v12H4V14z" fill="#c4c4c4" /><path d="M0 16 17 1l17 15" fill="#c4c4c4" /></Svg>
    <span className="ml-[1349px] whitespace-nowrap text-[23.5px] leading-none text-[#d8d8d8]">Adobe InDesign 2021</span>
    <Svg w={26} h={38} className="ml-[1470px]"><path d="M13 1a11 11 0 0 1 11 11c0 6-4 9-6 16H8C6 21 2 18 2 12A11 11 0 0 1 13 1z" fill="none" stroke="#cfcfcf" strokeWidth="1.8" /><path d="M9 28h8v6l-4 4-4-4z" fill="#cfcfcf" /></Svg>
    <div className="relative ml-[44px]">
      <Svg w={32} h={36}><path d="M8 14H2v20h26V14h-6" fill="none" stroke="#d0d0d0" strokeWidth="2.4" /><path d="M2 31h26v4H2z" fill="#d0d0d0" /><path d="M15 24V5" stroke="#d0d0d0" strokeWidth="2.4" /><path d="M15 1l7 8H8z" fill="#d0d0d0" /></Svg>
      <span className="absolute right-[-6px] top-[-3px] h-[13px] w-[13px] rounded-full bg-[#4f8ee8]" />
    </div>
    <span className="ml-[20px] h-[36px] w-[2px] bg-[#5e5e5e]" />
    <span className="ml-[25px] text-[23px] font-semibold leading-none text-[#dedede]">Advanced</span>
    <span className="ml-[18px]"><Caret /></span>
    <span className="ml-[28px] h-[36px] w-[2px] bg-[#5e5e5e]" />
    <div className="ml-[10px] flex h-[38px] w-[243px] items-center rounded-[6px] border-2 border-[#6a6a6a] bg-[#474747] pl-[6px]">
      <Svg w={18} h={22}><circle cx="8" cy="9" r="6.500" fill="none" stroke="#c8c8c8" strokeWidth="1.8" /><path d="M12 14l5 7" stroke="#c8c8c8" strokeWidth="2" /></Svg>
      <span className="ml-[1px]"><Caret /></span>
      <span className="ml-[6px] whitespace-nowrap text-[20px] leading-none text-[#8a8a8a]">Adobe Stock</span>
    </div>
  </div>
);

const TabBar = () => (
  <div className="flex h-[55px] shrink-0 bg-[#404040]">
    <div className="flex w-[794px] items-center bg-[#535353] pl-[28px]">
      <Svg w={16} h={16}><path d="M2 2 14 14M14 2 2 14" stroke="#e0e0e0" strokeWidth="2" /></Svg>
      <span className="ml-[15px] whitespace-nowrap text-[20.5px] leading-none text-[#dcdcdc]">*Friendhood – U4L3 – Folios &amp; Page Furniture.indd @ 100% [GPU Preview]</span>
    </div>
  </div>
);

const RulerRow = () => (
  <div className="flex h-[28px] shrink-0 bg-[#555555]">
    <div className="relative h-full w-[29px] shrink-0 bg-[#1c1c1c]">
      <span className="absolute left-[9px] top-0 h-full border-l-2 border-dotted border-[#cccccc]" />
      <span className="absolute left-0 top-[8px] w-[24px] border-t-2 border-dotted border-[#cccccc]" />
    </div>
    <div className="relative flex h-full w-[3390px] shrink-0 overflow-hidden bg-[#1c1c1c]">
      <div className="-ml-[21px] flex">{hVals.map((v, i) => <HCell key={i} v={v} />)}</div>
      <span className="absolute left-[2301px] top-0 h-full border-l-2 border-dotted border-[#d0d0d0]" />
    </div>
  </div>
);

const Pasteboard = () => (
  <div className="flex h-[1868px] shrink-0">
    <div className="flex w-[31px] shrink-0 flex-col">
      <div className="h-[78px] shrink-0 bg-[#5d5d5d]" />
      <div className="h-[1708px] shrink-0 overflow-hidden bg-[#5d5d5d]">
        <div className="mt-[3px] flow-root h-[1705px] border-r-2 border-[#6a6a6a] bg-[#1c1c1c] pl-px">
          <div className="-mt-[8.5px]">{vVals.map((v, i) => <VCell key={i} v={v} />)}</div>
        </div>
      </div>
      <div className="flex-1 bg-[#5a5a5a]" />
    </div>
    <div className="flex w-[3389px] shrink-0 flex-col">
      <div className="h-[81px] shrink-0 border-b-2 border-[#686868] bg-[#5d5d5d]" />
      <div className="h-[1705px] shrink-0 bg-[#5e5e5e] pl-[786px] pt-[164px]">
        <div className="h-[1378px] w-[1929px] border-2 border-[#99506a] pl-[18px] pt-[17px]"><Page /></div>
      </div>
      <div className="flex-1 border-t-2 border-[#686868] bg-[#5a5a5a]" />
    </div>
    <div className="w-[29px] shrink-0 bg-[#565656]" />
  </div>
);

const StatusBar = () => (
  <div className="flex h-[32px] shrink-0 items-center bg-[#535353] text-[20px] leading-none text-[#d6d6d6]">
    <span className="ml-[29px] w-[70px] shrink-0">100%</span>
    <span className="ml-[8px]"><Caret /></span>
    <Svg w={16} h={22} className="ml-[23px]"><path d="M1 1h3v20H1zM15 1v20L5 11z" fill="#7e7e7e" /></Svg>
    <Svg w={10} h={22} className="ml-[25px]"><path d="M9 1v20L1 11z" fill="#7e7e7e" /></Svg>
    <div className="ml-[25px] flex h-[29px] w-[168px] shrink-0 items-center rounded-[5px] border-2 border-[#6a6a6a] bg-[#444444] pl-[6px]">
      <span className="flex-1">A-Master</span>
      <div className="flex h-full w-[34px] items-center justify-center border-l-2 border-[#5f5f5f]"><Caret /></div>
    </div>
    <Svg w={10} h={22} className="ml-[24px]"><path d="M1 1v20l8-10z" fill="#7e7e7e" /></Svg>
    <Svg w={16} h={22} className="ml-[27px]"><path d="M15 1h-3v20h3zM1 1v20l10-10z" fill="#7e7e7e" /></Svg>
    <Svg w={30} h={28} className="ml-[32px]"><path d="M3 22V10a8 8 0 0 1 16 0v12" fill="none" stroke={C} strokeWidth="5" /><path d="M11 6h8v10h-4" fill="none" stroke={C} strokeWidth="2" /><path d="M23 24h6l-3 4z" fill={C} /></Svg>
    <span className="ml-[29px] w-[190px] shrink-0 whitespace-nowrap text-[19px]">[Basic] (working)</span>
    <span className="ml-[2px]"><Caret /></span>
    <span className="ml-[30px] h-[20px] w-[20px] shrink-0 rounded-full bg-[#5fb05a]" />
    <span className="ml-[10px] w-[115px] shrink-0 whitespace-nowrap text-[19px]">No errors</span>
    <span className="ml-[3px]"><Caret /></span>
    <div className="ml-[11px] flex h-full w-[2417px] shrink-0 items-center bg-[#4b4b4b] pl-[101px]">
      <div className="h-[24px] w-[2138px] rounded-full bg-[#6b6b6b]" />
    </div>
    <Svg w={28} h={20} className="ml-[6px]"><rect x="1" y="1" width="26" height="18" fill="none" stroke={C} strokeWidth="1.8" /><path d="M14 1v18" stroke={C} strokeWidth="1.8" /></Svg>
  </div>
);

export default function App() {
  return (
    <div className="relative flex h-[2160px] w-[3840px] flex-col overflow-hidden bg-[#535353] font-['Open_Sans',sans-serif]">
      <TitleBar />
      <ControlPanel />
      <div className="flex h-[1984px] shrink-0">
        <ToolBar />
        <div className="w-[5px] shrink-0 bg-[#3f3f3f]" />
        <div className="flex w-[3449px] shrink-0 flex-col">
          <TabBar />
          <RulerRow />
          <Pasteboard />
          <StatusBar />
        </div>
        <div className="w-[5px] shrink-0 bg-[#3f3f3f]" />
        <RightPanel />
      </div>
      <ParagraphPanel />
    </div>
  );
}
